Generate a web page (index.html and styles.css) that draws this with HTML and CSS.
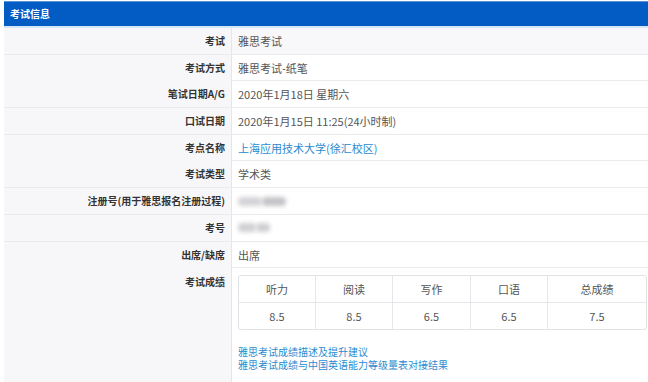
FILE: index.html
```html
<!DOCTYPE html>
<html lang="zh-CN">
<head>
<meta charset="utf-8">
<link rel="stylesheet" href="styles.css">
</head>
<body>
<div class="panel">
  <div class="panel-head">考试信息</div>
  <div class="info">
    <div class="row first"><div class="label">考试</div><div class="value">雅思考试</div></div>
    <div class="row"><div class="label">考试方式</div><div class="value">雅思考试-纸笔</div></div>
    <div class="row"><div class="label">笔试日期A/G</div><div class="value">2020年1月18日 星期六</div></div>
    <div class="row"><div class="label">口试日期</div><div class="value">2020年1月15日 11:25(24小时制)</div></div>
    <div class="row"><div class="label">考点名称</div><div class="value"><a class="link" href="#">上海应用技术大学(徐汇校区)</a></div></div>
    <div class="row"><div class="label">考试类型</div><div class="value">学术类</div></div>
    <div class="row"><div class="label">注册号(用于雅思报名注册过程)</div><div class="value"><span class="blur b1"></span><span class="blur b2"></span></div></div>
    <div class="row"><div class="label">考号</div><div class="value"><span class="blur b3"></span><span class="blur b4"></span></div></div>
    <div class="row"><div class="label">出席/缺席</div><div class="value">出席</div></div>
    <div class="row last">
      <div class="label">考试成绩</div>
      <div class="value scores">
        <div class="score-table">
          <div class="cell h">听力</div><div class="cell h">阅读</div><div class="cell h">写作</div><div class="cell h">口语</div><div class="cell h">总成绩</div>
          <div class="cell">8.5</div><div class="cell">8.5</div><div class="cell">6.5</div><div class="cell">6.5</div><div class="cell">7.5</div>
        </div>
        <div class="links">
          <a class="link" href="#">雅思考试成绩描述及提升建议</a>
          <a class="link" href="#">雅思考试成绩与中国英语能力等级量表对接结果</a>
        </div>
      </div>
    </div>
  </div>
</div>
</body>
</html>
```

FILE: styles.css
```css
html, body {
  margin: 0;
  padding: 0;
  background: #ffffff;
}
body {
  font-family: "Noto Sans CJK SC", "Noto Sans", sans-serif;
  font-size: 11px;
  color: #555;
}
.panel {
  margin: 1px 0 0 4px;
  width: 644px;
}
.panel-head {
  background: #035cc4;
  border-top: 1px solid #5b93d8;
  height: 24px;
  line-height: 23px;
  padding-left: 6px;
  color: #fff;
  font-weight: bold;
  font-size: 10px;
  border-bottom: 2px solid #d7e6f6;
}
.row {
  display: grid;
  grid-template-columns: 228px 1fr;
  height: 26.7px;
  border-bottom: 1px solid #ebebee;
  box-sizing: border-box;
}
.label {
  background: #f7f7f9;
  border-right: 1px solid #e6e6ea;
  text-align: right;
  padding-right: 6px;
  font-weight: bold;
  font-size: 10px;
  color: #333;
  line-height: 26px;
}
.value {
  padding-left: 6px;
  line-height: 26px;
  color: #555;
  display: flex;
  align-items: center;
}
.row.first .value { background: #f8f8fa; }
.link {
  color: #2a8bd0;
  text-decoration: none;
}
.blur {
  display: inline-block;
  height: 9px;
  background: #c8c8cc;
  filter: blur(2px);
  border-radius: 4px;
}
.b1 { width: 24px; background: #d4d4d8; }
.b2 { width: 24px; background: #c4c4c8; }
.b3 { width: 18px; background: #d0d0d4; }
.b4 { width: 14px; background: #cfcfd3; }
.row.last {
  height: 120px;
  border-bottom: none;
}
.row.last .label {
  line-height: normal;
  padding-top: 6px;
}
.scores {
  display: block;
  padding: 7px 0 0 6px;
  line-height: normal;
}
.score-table {
  display: grid;
  grid-template-columns: 77px 77px 78px 77px 1fr;
  border: 1px solid #e3e3e7;
  border-radius: 3px;
  width: 409px;
  box-sizing: border-box;
}
.cell {
  height: 26.5px;
  line-height: 26px;
  text-align: center;
  border-right: 1px solid #e6e6ea;
  color: #555;
  box-sizing: border-box;
}
.cell:nth-child(5n) { border-right: none; }
.cell.h { border-bottom: 1px solid #e6e6ea; }
.links {
  margin-top: 15px;
  display: flex;
  flex-direction: column;
  font-size: 10px;
  line-height: 13px;
}
```
